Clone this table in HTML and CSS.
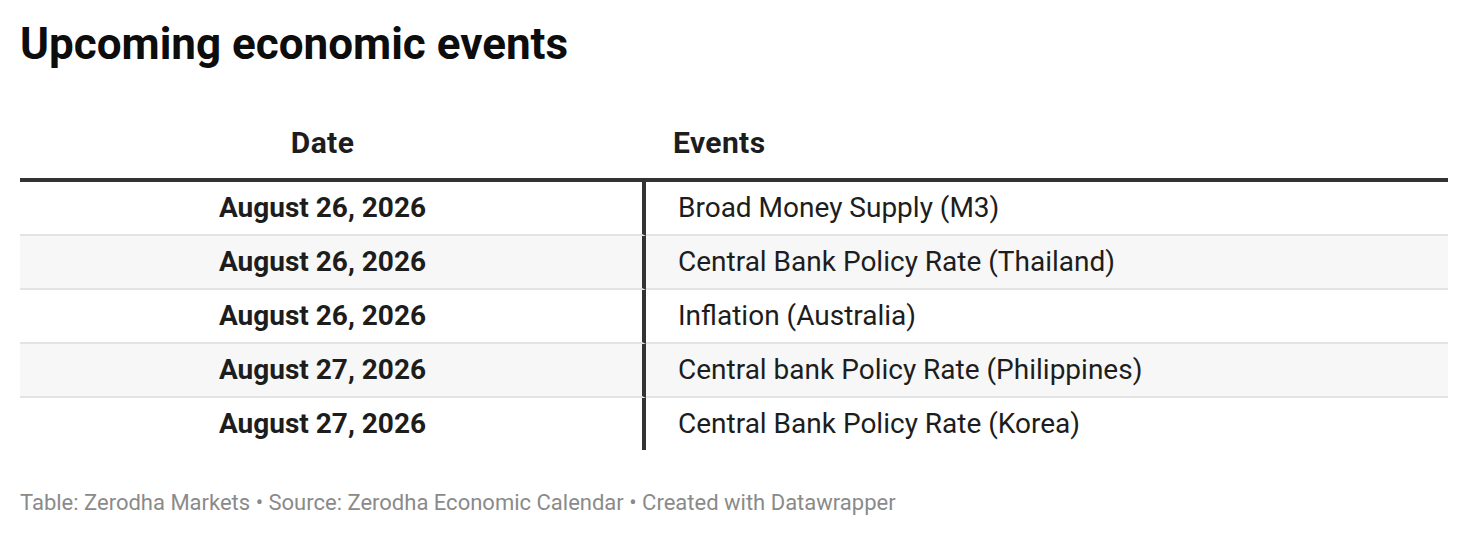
FILE: index.html
```html
<!DOCTYPE html>
<html lang="en">
<head>
<meta charset="utf-8">
<title>Upcoming economic events</title>
<link rel="stylesheet" href="styles.css">
</head>
<body>
<div class="chart">
  <h1 class="title">Upcoming economic events</h1>
  <table class="tbl">
    <colgroup>
      <col class="col-date">
      <col class="col-event">
    </colgroup>
    <thead>
      <tr>
        <th class="c-date">Date</th>
        <th class="c-event">Events</th>
      </tr>
    </thead>
    <tbody>
      <tr><td class="c-date">August 26, 2026</td><td class="c-event">Broad Money Supply (M3)</td></tr>
      <tr class="alt"><td class="c-date">August 26, 2026</td><td class="c-event">Central Bank Policy Rate (Thailand)</td></tr>
      <tr><td class="c-date">August 26, 2026</td><td class="c-event">Inflation (Australia)</td></tr>
      <tr class="alt"><td class="c-date">August 27, 2026</td><td class="c-event">Central bank Policy Rate (Philippines)</td></tr>
      <tr class="last"><td class="c-date">August 27, 2026</td><td class="c-event">Central Bank Policy Rate (Korea)</td></tr>
    </tbody>
  </table>
  <div class="footer">Table: Zerodha Markets • Source: Zerodha Economic Calendar • Created with Datawrapper</div>
</div>
</body>
</html>
```

FILE: styles.css
```css
html, body {
  margin: 0;
  padding: 0;
  background: #ffffff;
}
body {
  font-family: Roboto, "Liberation Sans", sans-serif;
  color: #1d1d1d;
}
.chart {
  padding: 18px 20px 0 20px;
}
.title {
  margin: 0;
  font-size: 44px;
  font-weight: 700;
  line-height: 52px;
  color: #0d0d0d;
}
.tbl {
  margin-top: 55px;
  width: 1428px;
  table-layout: fixed;
  border-collapse: separate;
  border-spacing: 0;
}
.col-date {
  width: 626px;
}
.tbl th {
  font-size: 30px;
  font-weight: 700;
  line-height: 36px;
  letter-spacing: 0.4px;
  padding: 0 0 17px 0;
  border-bottom: 4px solid #333333;
}
.tbl th.c-date {
  text-align: center;
  padding-right: 21px;
}
.tbl th.c-event {
  text-align: left;
  padding-left: 27px;
}
.tbl td {
  font-size: 28px;
  line-height: 52px;
  padding: 0;
  border-bottom: 2px solid #e3e3e3;
  white-space: nowrap;
}
.tbl tr.last td {
  border-bottom: none;
}
.tbl tr.alt td {
  background: #f7f7f7;
}
.tbl td.c-date {
  font-weight: 700;
  text-align: center;
  padding-right: 17px;
  border-right: 4px solid #333333;
}
.tbl td.c-event {
  padding-left: 32px;
  font-weight: 400;
}
.footer {
  margin-top: 40px;
  font-size: 22px;
  line-height: 26px;
  color: #8a8a8a;
}
```
